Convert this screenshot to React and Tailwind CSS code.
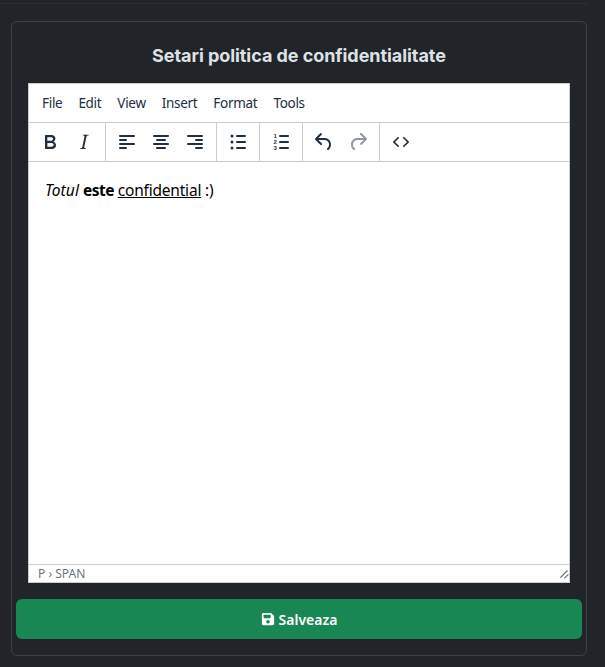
import { FaSave } from "react-icons/fa";

const menuItems = ["File", "Edit", "View", "Insert", "Format", "Tools"];

function Icon({ children, className = "fill-[#222f3e]" }) {
  return (
    <svg className={className} height="24" viewBox="0 0 24 24" width="24">
      {children}
    </svg>
  );
}

function ToolButton({ children }) {
  return <span className="flex h-[38px] w-[34px] items-center justify-center">{children}</span>;
}

function ToolGroup({ children, last }) {
  return <div className={`flex px-1 ${last ? "" : "border-r border-[#cccccc]"}`}>{children}</div>;
}

function AlignIcon({ rows }) {
  return (
    <Icon>
      {rows.map(([x, y, w]) => (
        <rect height="2" key={y} rx="1" width={w} x={x} y={y} />
      ))}
    </Icon>
  );
}

export default function App() {
  return (
    <div className="h-[667px] overflow-hidden bg-[#212529] font-['Noto_Sans',sans-serif]">
      <div className="h-[4px] w-[588px] border-b border-[#2c3034]" />
      <section className="mt-[17px] ml-[11px] h-[635px] w-[576px] rounded-md border border-[#3d4145] px-1 pt-[21px]">
        <h2 className="text-center font-['Inter',sans-serif] text-lg leading-[26px] font-bold tracking-[-0.06px] text-[#dee2e6]">
          Setari politica de confidentialitate
        </h2>
        <div className="mx-3 mt-[14px] flex h-[500px] flex-col border border-[#cccccc] bg-white">
          <div className="flex h-[39px] items-center gap-4 border-b border-[#cccccc] pl-[13px] text-[13.5px] tracking-[-0.3px] text-[#222f3e]">
            {menuItems.map((item) => (
              <span key={item}>{item}</span>
            ))}
          </div>
          <div className="flex h-[39px] border-b border-[#cccccc]">
            <ToolGroup>
              <ToolButton>
                <Icon>
                  <path d="M7.8 19c-.3 0-.5 0-.6-.2l-.2-.5V5.7c0-.2 0-.4.2-.5l.6-.2h5c1.5 0 2.7.3 3.5 1 .7.6 1.1 1.4 1.1 2.5a3 3 0 0 1-.6 1.9c-.4.6-1 1-1.6 1.2.4.1.9.3 1.3.6s.8.7 1 1.2c.4.4.5 1 .5 1.6 0 1.3-.4 2.3-1.3 3-.8.7-2.1 1-3.8 1H7.8zm5-8.3c.6 0 1.2-.1 1.6-.5.4-.3.6-.7.6-1.3 0-1.1-.8-1.7-2.3-1.7H9.3v3.5h3.4zm.5 6c.7 0 1.3-.1 1.7-.4.4-.4.6-.9.6-1.5s-.2-1-.7-1.4c-.4-.3-1-.4-2-.4H9.4v3.8h4z" />
                </Icon>
              </ToolButton>
              <ToolButton>
                <Icon>
                  <path d="M16.7 4.7l-.1.9h-.3c-.6 0-1 0-1.4.3-.3.3-.4.6-.5 1.1l-2.1 9.8v.6c0 .5.4.8 1.4.8h.2l-.2.8H8l.2-.8h.2c1.1 0 1.8-.5 2-1.5l2-9.8.1-.5c0-.6-.4-.8-1.4-.8h-.3l.2-.9h5.8z" />
                </Icon>
              </ToolButton>
            </ToolGroup>
            <ToolGroup>
              <ToolButton>
                <AlignIcon rows={[[4, 5, 16], [4, 9, 8], [4, 13, 16], [4, 17, 8]]} />
              </ToolButton>
              <ToolButton>
                <AlignIcon rows={[[4, 5, 16], [7, 9, 10], [4, 13, 16], [7, 17, 10]]} />
              </ToolButton>
              <ToolButton>
                <AlignIcon rows={[[4, 5, 16], [12, 9, 8], [4, 13, 16], [12, 17, 8]]} />
              </ToolButton>
            </ToolGroup>
            <ToolGroup>
              <ToolButton>
                <Icon>
                  <rect height="2" rx="1" width="10" x="10" y="5" />
                  <rect height="2" rx="1" width="10" x="10" y="11" />
                  <rect height="2" rx="1" width="10" x="10" y="17" />
                  <circle cx="6" cy="6" r="1.5" />
                  <circle cx="6" cy="12" r="1.5" />
                  <circle cx="6" cy="18" r="1.5" />
                </Icon>
              </ToolButton>
            </ToolGroup>
            <ToolGroup>
              <ToolButton>
                <Icon>
                  <rect height="2" rx="1" width="10" x="10" y="5" />
                  <rect height="2" rx="1" width="10" x="10" y="11" />
                  <rect height="2" rx="1" width="10" x="10" y="17" />
                  <text fontFamily="Liberation Sans, sans-serif" fontSize="6" fontWeight="700" x="4.5" y="8">1</text>
                  <text fontFamily="Liberation Sans, sans-serif" fontSize="6" fontWeight="700" x="4.5" y="14">2</text>
                  <text fontFamily="Liberation Sans, sans-serif" fontSize="6" fontWeight="700" x="4.5" y="20">3</text>
                </Icon>
              </ToolButton>
            </ToolGroup>
            <ToolGroup>
              <ToolButton>
                <Icon>
                  <path d="M6.4 8H12c3.7 0 6.2 2 6.8 5.1.6 2.7-.4 5.6-2.3 6.8a1 1 0 0 1-1-1.8c1.1-.6 1.8-2.7 1.4-4.6-.5-2.1-2.1-3.5-4.9-3.5H6.4l3.3 3.3a1 1 0 1 1-1.4 1.4l-5-5a1 1 0 0 1 0-1.4l5-5a1 1 0 0 1 1.4 1.4L6.4 8z" />
                </Icon>
              </ToolButton>
              <ToolButton>
                <Icon className="fill-[#222f3e]/50">
                  <path d="M17.6 10H12c-2.8 0-4.4 1.4-4.9 3.5-.4 2 .3 4 1.4 4.6a1 1 0 1 1-1 1.8c-2-1.2-2.9-4.1-2.3-6.8.6-3 3-5.1 6.8-5.1h5.6l-3.3-3.3a1 1 0 1 1 1.4-1.4l5 5a1 1 0 0 1 0 1.4l-5 5a1 1 0 0 1-1.4-1.4l3.3-3.3z" />
                </Icon>
              </ToolButton>
            </ToolGroup>
            <ToolGroup last>
              <ToolButton>
                <Icon>
                  <path d="M9.8 15.7c.3.3.3.8 0 1-.3.4-.9.4-1.2 0l-4.4-4.1a.8.8 0 0 1 0-1.2l4.4-4.2c.3-.3.9-.3 1.2 0 .3.3.3.8 0 1.1L6 12l3.8 3.7zm4.4 0c-.3.3-.3.8 0 1 .3.4.9.4 1.2 0l4.4-4.1c.3-.3.3-.9 0-1.2l-4.4-4.2a.8.8 0 0 0-1.2 0c-.3.3-.3.8 0 1.1L18 12l-3.8 3.7z" />
                </Icon>
              </ToolButton>
            </ToolGroup>
          </div>
          <div className="flex-1 px-4 pt-4 text-[15.5px] leading-[24px] tracking-[-0.2px] text-black">
            <em className="tracking-[0.1px]">Totul</em> <strong className="tracking-[-0.5px]">este</strong> <span className="underline">confidential</span> :)
          </div>
          <div className="flex h-[18px] items-center justify-between border-t border-[#cccccc] pl-[9px] text-[12px] text-[#222f3e]/70">
            <span>P › SPAN</span>
            <svg className="fill-[#222f3e]/70" height="10" viewBox="0 0 10 10" width="10">
              <path d="M8.1 1.1.9 8.3l.8.8 7.2-7.2zM9 4.9 4.9 9l.8.8L9.8 5.7z" />
            </svg>
          </div>
        </div>
        <button
          className="mt-4 flex h-10 w-full items-center justify-center gap-1 rounded-md bg-[#198754] text-[14px] font-semibold text-white"
          type="button"
        >
          <FaSave size={14} /> Salveaza
        </button>
      </section>
    </div>
  );
}
